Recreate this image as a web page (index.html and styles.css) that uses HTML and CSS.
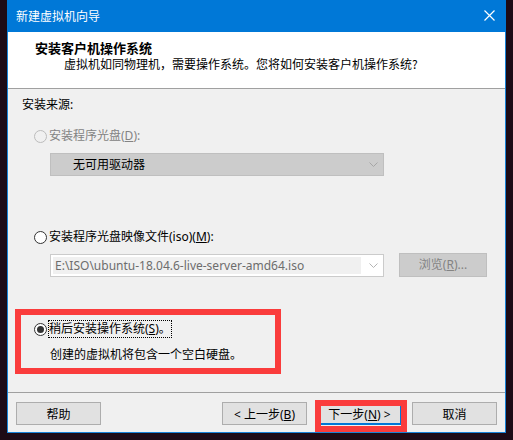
FILE: index.html
```html
<!DOCTYPE html>
<html lang="zh-CN">
<head>
    <meta charset="UTF-8">
    <title>新建虚拟机向导</title>
    <link rel="stylesheet" href="styles.css">
</head>
<body>
    <div class="desk">
        <div class="window">
            <div class="titlebar">
                <span class="title">新建虚拟机向导</span>
                <svg class="close" width="11" height="11" viewBox="0 0 11 11">
                    <path d="M0.5 0.5 L10.5 10.5 M10.5 0.5 L0.5 10.5" stroke="#fff" stroke-width="1.2" fill="none"/>
                </svg>
            </div>

            <div class="header">
                <div class="heading">安装客户机操作系统</div>
                <div class="subtitle">虚拟机如同物理机，需要操作系统。您将如何安装客户机操作系统?</div>
            </div>

            <div class="content">
                <div class="label">安装来源:</div>

                <div class="radio-row disabled first">
                    <span class="radio"></span>
                    <span>安装程序光盘(<u>D</u>):</span>
                </div>
                <div class="combo combo-disabled">
                    <span class="combo-text">无可用驱动器</span>
                    <svg class="chevron" width="9" height="5" viewBox="0 0 9 5">
                        <path d="M0.5 0.5 L4.5 4.5 L8.5 0.5" stroke="#a6a6a6" fill="none"/>
                    </svg>
                </div>

                <div class="radio-row second">
                    <span class="radio"></span>
                    <span>安装程序光盘映像文件(iso)(<u>M</u>):</span>
                </div>
                <div class="iso-row">
                    <div class="combo combo-iso">
                        <span class="combo-field">E:\ISO\ubuntu-18.04.6-live-server-amd64.iso</span>
                        <svg class="chevron" width="9" height="5" viewBox="0 0 9 5">
                            <path d="M0.5 0.5 L4.5 4.5 L8.5 0.5" stroke="#b4b4b4" fill="none"/>
                        </svg>
                    </div>
                    <div class="browse">浏览(<u>R</u>)...</div>
                </div>

                <div class="later-box">
                    <div class="radio-row">
                        <span class="radio checked"></span>
                        <span class="focus">稍后安装操作系统(<u>S</u>)。</span>
                    </div>
                    <div class="note">创建的虚拟机将包含一个空白硬盘。</div>
                </div>
            </div>

            <div class="footer">
                <button class="btn">帮助</button>
                <div class="nav">
                    <button class="btn">&lt; 上一步(<u>B</u>)</button>
                    <div class="next-wrap">
                        <button class="btn btn-default">下一步(<u>N</u>) &gt;</button>
                        <div class="mark"></div>
                    </div>
                    <button class="btn">取消</button>
                </div>
            </div>
        </div>
    </div>
</body>
</html>
```

FILE: styles.css
```css
body {
    margin: 0;
    background-color: #1d0b16;
    font-family: "Noto Sans", "Noto Sans CJK SC", sans-serif;
    font-size: 12px;
    color: #000;
}
.desk {
    width: 513px;
    height: 440px;
    padding-left: 7px;
    box-sizing: border-box;
}
.window {
    width: 499px;
    height: 433px;
    box-sizing: border-box;
    border: 1px solid #1883d7;
    border-top: none;
    background-color: #f0f0f0;
    display: flex;
    flex-direction: column;
}
.titlebar {
    height: 31px;
    margin: 0 -1px;
    background-color: #0078d7;
    display: flex;
    align-items: center;
    justify-content: space-between;
    padding: 0 11px 1px 9px;
}
.title {
    color: #fff;
    font-family: "Noto Sans CJK SC", sans-serif;
    font-size: 12px;
    line-height: 16px;
}
.close {
    display: block;
}
.header {
    height: 56px;
    background-color: #fff;
    border-bottom: 1px solid #a0a0a0;
    padding: 8px 0 0 27px;
    box-sizing: border-box;
    height: 57px;
}
.heading {
    font-family: "Noto Sans CJK SC", sans-serif;
    font-weight: bold;
    font-size: 13px;
    line-height: 16px;
}
.subtitle {
    margin-left: 29px;
    line-height: 16px;
    font-family: "Noto Sans CJK SC", sans-serif;
}
.content {
    padding: 8px 0 0 14px;
    line-height: 16px;
}
.radio-row {
    display: flex;
    align-items: center;
    margin-left: 12px;
    height: 16px;
}
.radio-row.first {
    margin-top: 15px;
}
.radio-row.second {
    margin-top: 53px;
}
.disabled {
    color: #838383;
}
.radio {
    width: 11px;
    height: 11px;
    border: 1px solid #333;
    border-radius: 50%;
    background-color: #fff;
    margin-right: 2px;
    display: flex;
    align-items: center;
    justify-content: center;
}
.disabled .radio {
    border-color: #bcbcbc;
    background-color: #f0f0f0;
}
.radio.checked::after {
    content: "";
    width: 7px;
    height: 7px;
    border-radius: 50%;
    background-color: #333;
}
.combo {
    margin-left: 28px;
    width: 334px;
    height: 23px;
    box-sizing: border-box;
    display: flex;
    align-items: center;
    justify-content: space-between;
    padding-right: 5px;
}
.combo-disabled {
    margin-top: 9px;
    background-color: #cccccc;
    border: 1px solid #bfbfbf;
}
.combo-text {
    padding-left: 22px;
}
.iso-row {
    display: flex;
    align-items: center;
    margin-top: 8px;
}
.combo-iso {
    background-color: #fff;
    border: 1px solid #cbcbcb;
    padding-left: 2px;
}
.combo-field {
    width: 308px;
    height: 17px;
    line-height: 17px;
    background-color: #f0f0f0;
    color: #6d6d6d;
    padding-left: 2px;
    box-sizing: border-box;
    white-space: nowrap;
    overflow: hidden;
}
.browse {
    margin-left: 15px;
    width: 88px;
    height: 24px;
    line-height: 22px;
    box-sizing: border-box;
    background-color: #cccccc;
    border: 1px solid #bfbfbf;
    color: #838383;
    text-align: center;
}
.later-box {
    margin: 32px 0 0 -7px;
    width: 266px;
    box-sizing: border-box;
    border: 6px solid #fa3c3c;
    padding: 6px 0 5px 1px;
}
.focus {
    outline: 1px dotted #000;
}
.note {
    margin: 10px 0 0 28px;
}
.footer {
    margin-top: auto;
    border-top: 1px solid #a0a0a0;
    padding: 9px 8px 7px 8px;
    display: flex;
    justify-content: space-between;
}
.nav {
    display: flex;
    gap: 10px;
}
.btn {
    width: 85px;
    height: 23px;
    padding: 0;
    box-sizing: border-box;
    background-color: #e1e1e1;
    border: 1px solid #adadad;
    font-family: "Noto Sans", "Noto Sans CJK SC", sans-serif;
    font-size: 12px;
    color: #000;
}
.btn-default {
    border: 2px solid #0078d7;
}
.next-wrap {
    position: relative;
}
/* red highlight frame drawn over the default button */
.mark {
    position: absolute;
    left: -2px;
    top: -2px;
    width: 92px;
    height: 32px;
    box-sizing: border-box;
    border: 6px solid #fa3c3c;
    border-bottom-width: 6px;
}
```
